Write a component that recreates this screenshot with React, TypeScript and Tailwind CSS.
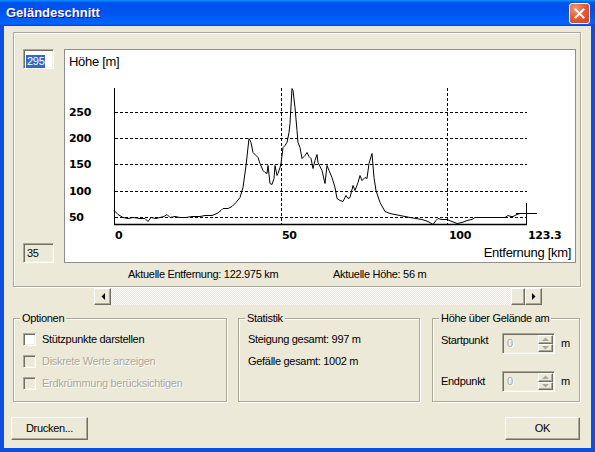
const profile: [number, number][] = [
  [114, 210], [118, 214], [123, 217], [128, 218], [133, 217], [140, 218], [145, 218],
  [148, 221], [151, 217], [156, 218], [160, 217], [164, 216], [167, 214], [170, 217],
  [175, 216], [180, 217], [186, 217], [192, 216], [200, 216], [205, 215], [212, 215],
  [217, 213], [221, 210], [223, 208], [228, 208], [232, 206], [236, 202], [240, 197],
  [243, 187], [246, 165], [249, 138], [251, 142], [253, 152], [256, 155], [258, 157],
  [260, 163], [263, 170], [265, 172], [267, 173], [268, 165], [270, 183], [272, 184],
  [274, 178], [275, 165], [277, 175], [278, 173], [280, 167], [281, 163], [283, 147],
  [285, 145], [287, 142], [289, 132], [290, 123], [292, 88], [293, 90], [295, 107],
  [297, 130], [298, 142], [300, 147], [302, 158], [305, 155], [307, 152], [309, 156],
  [311, 158], [313, 168], [315, 160], [317, 154], [318, 162], [320, 166], [322, 170],
  [325, 183], [327, 165], [329, 170], [332, 177], [335, 187], [337, 198], [340, 200],
  [343, 201], [346, 195], [348, 198], [350, 197], [353, 185], [355, 190], [358, 182],
  [360, 175], [362, 180], [365, 177], [367, 178], [369, 163], [372, 153], [374, 177],
  [376, 190], [380, 202], [385, 211], [390, 213], [400, 215], [410, 217], [416, 218],
  [422, 219], [428, 221], [433, 224], [436, 220], [438, 218], [442, 219], [447, 219],
  [452, 221], [457, 223], [462, 222], [467, 220], [472, 219], [475, 217], [487, 217],
  [505, 217], [508, 215], [511, 216], [513, 216], [517, 214], [520, 213], [526, 213],
];

const raised =
  "border border-t-white border-l-white border-b-[#716f64] border-r-[#716f64] shadow-[inset_-1px_-1px_0_#aca899]";
const sunken =
  "border border-t-[#aca899] border-l-[#aca899] border-b-white border-r-white shadow-[inset_1px_1px_0_#716f64,inset_-1px_-1px_0_#f1efe2]";
const etched = "border border-[#aca899] shadow-[inset_1px_1px_0_#fff,1px_1px_0_#fff]";
const disabledText = "text-[#aca899] [text-shadow:1px_1px_0_#fff]";

function Check({ label, disabled }: { label: string; disabled?: boolean }) {
  return (
    <div className="flex h-[22px] items-center">
      <span className={`h-[13px] w-[13px] ${sunken} ${disabled ? "bg-[#ece9d8]" : "bg-white"}`} />
      <span className={`ml-[6px] ${disabled ? disabledText : ""}`}>{label}</span>
    </div>
  );
}

function Arrow({ dir, color }: { dir: "left" | "right" | "up" | "down"; color: string }) {
  const pts = {
    left: "4,0 4,7 0.5,3.5",
    right: "0,0 0,7 3.5,3.5",
    up: "0,4 7,4 3.5,0.5",
    down: "0,0 7,0 3.5,3.5",
  }[dir];
  const size = dir === "left" || dir === "right" ? { w: 4, h: 7 } : { w: 7, h: 4 };
  return (
    <svg width={size.w} height={size.h} viewBox={`0 0 ${size.w} ${size.h}`}>
      <polygon points={pts} fill={color} />
    </svg>
  );
}

function Spin() {
  return (
    <div className={`flex h-[21px] w-[53px] bg-[#ece9d8] ${sunken}`}>
      <span className={`flex-1 pl-[4px] leading-[19px] ${disabledText}`}>0</span>
      <div className="flex w-[16px] flex-col py-[1px] pr-[1px]">
        <span className={`flex flex-1 items-center justify-center ${raised}`}>
          <Arrow dir="up" color="#aca899" />
        </span>
        <span className={`flex flex-1 items-center justify-center ${raised}`}>
          <Arrow dir="down" color="#aca899" />
        </span>
      </div>
    </div>
  );
}

function Group({ title, className, children }: { title: string; className: string; children: React.ReactNode }) {
  return (
    <div className={`relative h-[84px] ${etched} ${className}`}>
      <span className="absolute -top-[8px] left-[6px] bg-[#ece9d8] px-[2px] leading-[14px]">{title}</span>
      {children}
    </div>
  );
}

function Chart() {
  const grid = [112, 138, 164, 191, 217];
  const labels = ["250", "200", "150", "100", "50"];
  return (
    <svg width={510} height={212} viewBox="65 50 510 212" className="block">
      <text x={69} y={66} fontFamily="Liberation Sans, Arial, sans-serif" fontSize={13} fill="#000">
        Höhe [m]
      </text>
      <text x={571} y={257} textAnchor="end" fontFamily="Liberation Sans, Arial, sans-serif" fontSize={13} fill="#000">
        Entfernung [km]
      </text>
      {grid.map((y, i) => (
        <g key={y}>
          <line x1={115} x2={527} y1={y + 0.5} y2={y + 0.5} stroke="#000" strokeDasharray="3 2" />
          <text x={69} y={y + 4} fontFamily="DejaVu Sans, sans-serif" fontWeight="bold" fontSize={11}>
            {labels[i]}
          </text>
        </g>
      ))}
      <line x1={281.5} x2={281.5} y1={88} y2={224} stroke="#000" strokeDasharray="3 2" />
      <line x1={447.5} x2={447.5} y1={88} y2={224} stroke="#000" strokeDasharray="3 2" />
      <line x1={114.5} x2={114.5} y1={88} y2={225} stroke="#000" />
      <line x1={114} x2={527} y1={224.5} y2={224.5} stroke="#000" strokeWidth={1.3} />
      {[
        [115, "0"],
        [282, "50"],
        [449, "100"],
        [528, "123.3"],
      ].map(([x, t]) => (
        <text key={t} x={x} y={239} fontFamily="DejaVu Sans, sans-serif" fontWeight="bold" fontSize={11}>
          {t}
        </text>
      ))}
      <polyline
        points={profile.map(([x, y]) => `${x},${y + 0.5}`).join(" ")}
        fill="none"
        stroke="#000"
        strokeWidth={1}
      />
      <line x1={516} x2={537} y1={213.5} y2={213.5} stroke="#000" />
      <line x1={526.5} x2={526.5} y1={203} y2={224} stroke="#000" />
    </svg>
  );
}

export default function App() {
  return (
    <div className="flex h-[452px] w-[595px] flex-col overflow-hidden bg-[#0b4fe0] font-['Liberation_Sans',Arial,sans-serif] text-[11px] tracking-[-0.3px] text-black">
      {/* title bar */}
      <div className="flex h-[26px] shrink-0 items-center justify-between bg-[linear-gradient(180deg,#0997ff_0%,#0053ee_10%,#0050ee_40%,#0062fc_85%,#0066ff_92%,#003dd7_100%)] pl-[6px] pr-[5px]">
        <span className="text-[13px] font-bold tracking-normal text-white [text-shadow:1px_1px_0_#0f1089]">
          Geländeschnitt
        </span>
        <button className="flex h-[21px] w-[21px] items-center justify-center rounded-[3px] border border-white bg-[radial-gradient(circle_at_30%_25%,#f29774_0%,#e35a33_50%,#c9441d_100%)]">
          <svg width="11" height="11" viewBox="0 0 11 11">
            <path d="M1.5 1.5 L9.5 9.5 M9.5 1.5 L1.5 9.5" stroke="#fff" strokeWidth="2" strokeLinecap="square" />
          </svg>
        </button>
      </div>

      {/* dialog body */}
      <div className="mx-[4px] mb-[4px] flex flex-1 flex-col bg-[#ece9d8]">
        <div className={`ml-[9px] mt-[6px] h-[255px] w-[568px] ${etched}`}>
          <div className="flex pl-[9px] pt-[16px]">
            <div className="flex h-[214px] w-[31px] flex-col justify-between">
              <div className={`h-[20px] bg-white pl-[2px] pt-[3px] ${sunken}`}>
                <span className="inline-block bg-[#316ac5] px-[1px] leading-[13px] text-white">295</span>
              </div>
              <div className={`h-[20px] bg-[#ece9d8] pl-[3px] leading-[18px] ${sunken}`}>35</div>
            </div>
            <div className="ml-[10px] h-[214px] w-[512px] border border-[#8e8e8e] bg-white">
              <Chart />
            </div>
          </div>
          <div className="flex h-[22px] items-center pl-[114px]">
            <span className="w-[205px]">Aktuelle Entfernung: 122.975 km</span>
            <span>Aktuelle Höhe: 56 m</span>
          </div>
        </div>

        {/* scrollbar */}
        <div className="ml-[90px] mt-[1px] flex h-[17px] w-[448px]">
          <span className={`flex w-[17px] items-center justify-center bg-[#ece9d8] ${raised}`}>
            <Arrow dir="left" color="#000" />
          </span>
          <span className="flex-1 bg-[repeating-conic-gradient(#fbfaf6_0_25%,#ece9d8_0_50%)] bg-[length:2px_2px]" />
          <span className={`w-[14px] bg-[#ece9d8] ${raised}`} />
          <span className={`flex w-[17px] items-center justify-center bg-[#ece9d8] ${raised}`}>
            <Arrow dir="right" color="#000" />
          </span>
        </div>

        {/* group boxes */}
        <div className="ml-[9px] mt-[13px] flex gap-[11px]">
          <Group title="Optionen" className="w-[214px] pl-[9px] pt-[9px]">
            <Check label="Stützpunkte darstellen" />
            <Check label="Diskrete Werte anzeigen" disabled />
            <Check label="Erdkrümmung berücksichtigen" disabled />
          </Group>
          <Group title="Statistik" className="w-[182px] pl-[9px] pt-[9px]">
            <div className="flex h-[22px] items-center">Steigung gesamt: 997 m</div>
            <div className="flex h-[22px] items-center">Gefälle gesamt: 1002 m</div>
          </Group>
          <Group title="Höhe über Gelände am" className="ml-[1px] w-[148px] pl-[8px] pt-[14px]">
            <div className="flex h-[21px] items-center">
              <span className="w-[61px] -translate-y-[3px]">Startpunkt</span>
              <Spin />
              <span className="ml-[6px]">m</span>
            </div>
            <div className="mt-[17px] flex h-[21px] items-center">
              <span className="w-[61px]">Endpunkt</span>
              <Spin />
              <span className="ml-[6px]">m</span>
            </div>
          </Group>
        </div>

        {/* buttons */}
        <div className="ml-[7px] mr-[11px] mt-[15px] flex justify-between">
          <button className={`h-[23px] w-[77px] bg-[#ece9d8] ${raised}`}>Drucken...</button>
          <button className={`h-[23px] w-[75px] bg-[#ece9d8] ${raised}`}>OK</button>
        </div>
      </div>
    </div>
  );
}
